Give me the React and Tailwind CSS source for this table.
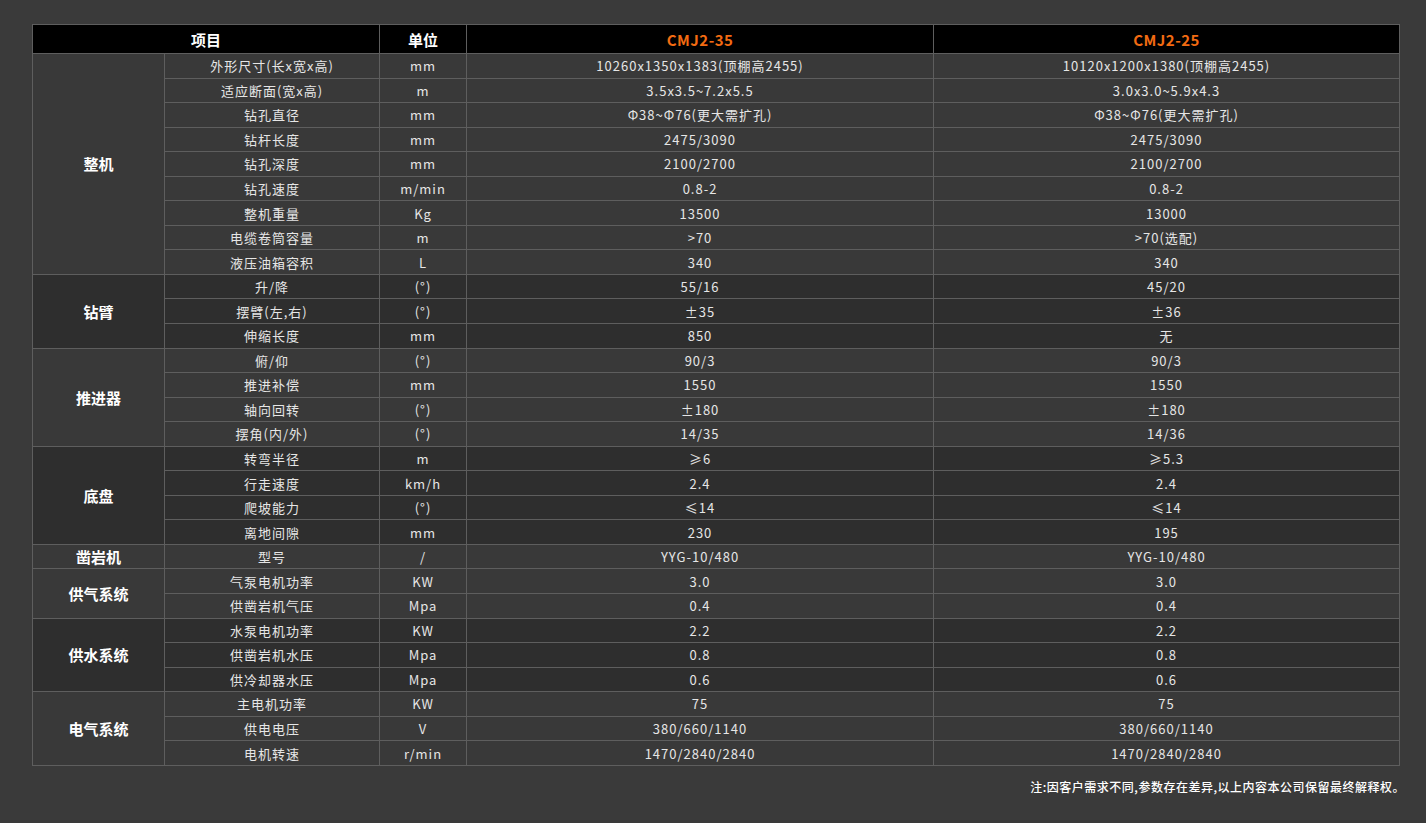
const groups = [
  {
    name: "整机",
    dark: false,
    rows: [
      ["外形尺寸(长x宽x高)", "mm", "10260x1350x1383(顶棚高2455)", "10120x1200x1380(顶棚高2455)"],
      ["适应断面(宽x高)", "m", "3.5x3.5~7.2x5.5", "3.0x3.0~5.9x4.3"],
      ["钻孔直径", "mm", "Φ38~Φ76(更大需扩孔)", "Φ38~Φ76(更大需扩孔)"],
      ["钻杆长度", "mm", "2475/3090", "2475/3090"],
      ["钻孔深度", "mm", "2100/2700", "2100/2700"],
      ["钻孔速度", "m/min", "0.8-2", "0.8-2"],
      ["整机重量", "Kg", "13500", "13000"],
      ["电缆卷筒容量", "m", ">70", ">70(选配)"],
      ["液压油箱容积", "L", "340", "340"],
    ],
  },
  {
    name: "钻臂",
    dark: true,
    rows: [
      ["升/降", "(°)", "55/16", "45/20"],
      ["摆臂(左,右)", "(°)", "±35", "±36"],
      ["伸缩长度", "mm", "850", "无"],
    ],
  },
  {
    name: "推进器",
    dark: false,
    rows: [
      ["俯/仰", "(°)", "90/3", "90/3"],
      ["推进补偿", "mm", "1550", "1550"],
      ["轴向回转", "(°)", "±180", "±180"],
      ["摆角(内/外)", "(°)", "14/35", "14/36"],
    ],
  },
  {
    name: "底盘",
    dark: true,
    rows: [
      ["转弯半径", "m", "≥6", "≥5.3"],
      ["行走速度", "km/h", "2.4", "2.4"],
      ["爬坡能力", "(°)", "≤14", "≤14"],
      ["离地间隙", "mm", "230", "195"],
    ],
  },
  {
    name: "凿岩机",
    dark: false,
    rows: [["型号", "/", "YYG-10/480", "YYG-10/480"]],
  },
  {
    name: "供气系统",
    dark: false,
    rows: [
      ["气泵电机功率", "KW", "3.0", "3.0"],
      ["供凿岩机气压", "Mpa", "0.4", "0.4"],
    ],
  },
  {
    name: "供水系统",
    dark: true,
    rows: [
      ["水泵电机功率", "KW", "2.2", "2.2"],
      ["供凿岩机水压", "Mpa", "0.8", "0.8"],
      ["供冷却器水压", "Mpa", "0.6", "0.6"],
    ],
  },
  {
    name: "电气系统",
    dark: false,
    rows: [
      ["主电机功率", "KW", "75", "75"],
      ["供电电压", "V", "380/660/1140", "380/660/1140"],
      ["电机转速", "r/min", "1470/2840/2840", "1470/2840/2840"],
    ],
  },
];

const cell = "border border-[#5e5e5e] text-center p-0 leading-none";

export default function App() {
  return (
    <div
      className="min-h-[823px] w-full bg-[#3a3a3a] pt-[24px] px-[32px] text-[#e6e6e6]"
      style={{ fontFamily: '"Noto Sans CJK SC", "Noto Sans", sans-serif' }}
    >
      <table className="w-[1367px] border-collapse table-fixed">
        <colgroup>
          <col className="w-[132px]" />
          <col className="w-[215px]" />
          <col className="w-[87px]" />
          <col className="w-[467px]" />
          <col className="w-[466px]" />
        </colgroup>
        <thead>
          <tr className="h-[29px] bg-black text-[15px] font-bold">
            <th colSpan={2} className={cell + " text-white"}>项目</th>
            <th className={cell + " text-white"}>单位</th>
            <th className={cell + " text-[#f26b12] tracking-[0.5px]"}>CMJ2-35</th>
            <th className={cell + " text-[#f26b12] tracking-[0.5px]"}>CMJ2-25</th>
          </tr>
        </thead>
        <tbody className="text-[13px] tracking-[1px]">
          {groups.map((g) =>
            g.rows.map((r, i) => (
              <tr
                key={g.name + i}
                className={"h-[24.55px] " + (g.dark ? "bg-[#2e2e2e]" : "bg-[#393939]")}
              >
                {i === 0 && (
                  <td
                    rowSpan={g.rows.length}
                    className={cell + " text-[15px] font-bold text-white tracking-normal"}
                  >
                    {g.name}
                  </td>
                )}
                <td className={cell}>{r[0]}</td>
                <td className={cell}>{r[1]}</td>
                <td className={cell}>{r[2]}</td>
                <td className={cell}>{r[3]}</td>
              </tr>
            ))
          )}
        </tbody>
      </table>
      <div className="w-[1373px] flex justify-end pt-[15px]">
        <p className="text-[12px] font-medium text-white leading-none tracking-[0.5px]">
          注:因客户需求不同,参数存在差异,以上内容本公司保留最终解释权。
        </p>
      </div>
    </div>
  );
}
